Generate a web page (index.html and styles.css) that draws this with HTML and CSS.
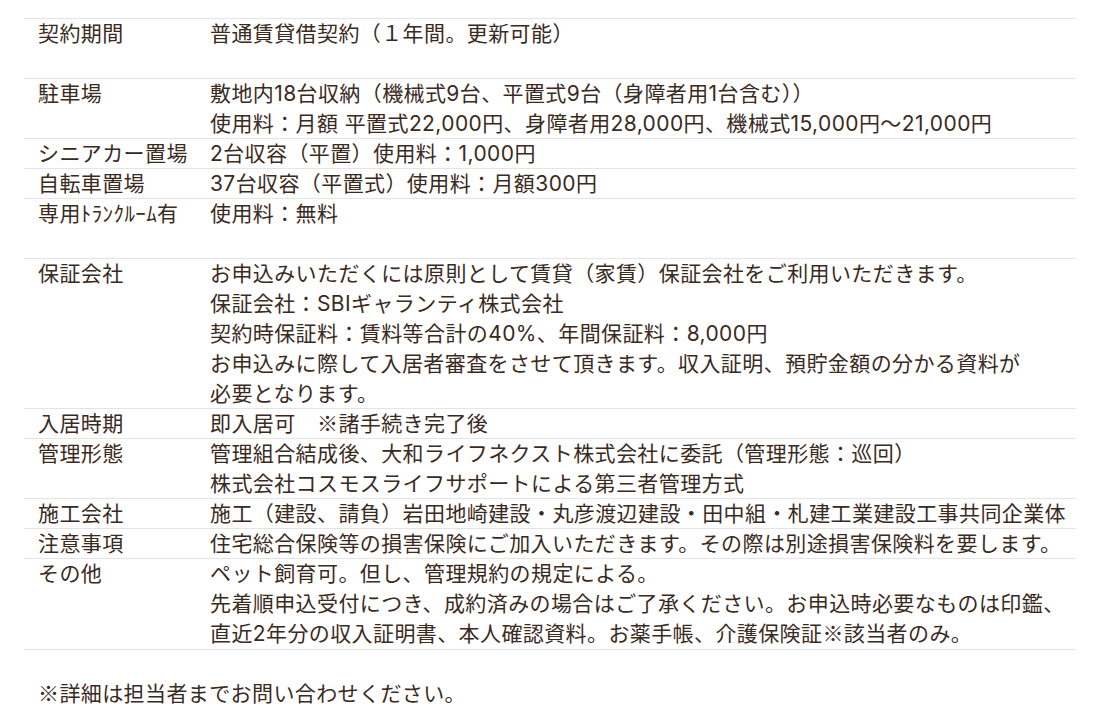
FILE: index.html
```html
<!DOCTYPE html>
<html lang="ja">
<head>
<meta charset="utf-8">
<title>物件概要</title>
<link rel="stylesheet" href="styles.css">
</head>
<body>
<div class="page">
  <div class="spec">
    <div class="row"><div class="label">契約期間</div><div class="value">普通賃貸借契約（１年間。更新可能）<br>&nbsp;</div></div>
    <div class="row"><div class="label">駐車場</div><div class="value">敷地内18台収納（機械式9台、平置式9台（身障者用1台含む））<br>使用料：月額 平置式22,000円、身障者用28,000円、機械式15,000円～21,000円</div></div>
    <div class="row"><div class="label">シニアカー置場</div><div class="value">2台収容（平置）使用料：1,000円</div></div>
    <div class="row"><div class="label">自転車置場</div><div class="value">37台収容（平置式）使用料：月額300円</div></div>
    <div class="row"><div class="label">専用ﾄﾗﾝｸﾙｰﾑ有</div><div class="value">使用料：無料<br>&nbsp;</div></div>
    <div class="row"><div class="label">保証会社</div><div class="value">お申込みいただくには原則として賃貸（家賃）保証会社をご利用いただきます。<br>保証会社：SBIギャランティ株式会社<br>契約時保証料：賃料等合計の40%、年間保証料：8,000円<br>お申込みに際して入居者審査をさせて頂きます。収入証明、預貯金額の分かる資料が<br>必要となります。</div></div>
    <div class="row"><div class="label">入居時期</div><div class="value">即入居可　<span class="mark">※</span>諸手続き完了後</div></div>
    <div class="row"><div class="label">管理形態</div><div class="value">管理組合結成後、大和ライフネクスト株式会社に委託（管理形態：巡回）<br>株式会社コスモスライフサポートによる第三者管理方式</div></div>
    <div class="row"><div class="label">施工会社</div><div class="value">施工（建設、請負）岩田地崎建設・丸彦渡辺建設・田中組・札建工業建設工事共同企業体</div></div>
    <div class="row"><div class="label">注意事項</div><div class="value">住宅総合保険等の損害保険にご加入いただきます。その際は別途損害保険料を要します。</div></div>
    <div class="row last"><div class="label">その他</div><div class="value">ペット飼育可。但し、管理規約の規定による。<br>先着順申込受付につき、成約済みの場合はご了承ください。お申込時必要なものは印鑑、<br>直近2年分の収入証明書、本人確認資料。お薬手帳、介護保険証<span class="mark">※</span>該当者のみ。</div></div>
  </div>
  <p class="note"><span class="mark">※</span>詳細は担当者までお問い合わせください。</p>
</div>
</body>
</html>
```
FILE: styles.css
```css
html, body {
  margin: 0;
  padding: 0;
  background: #ffffff;
}
body {
  font-family: "Inter", "Noto Sans CJK JP", sans-serif;
  font-size: 21px;
  letter-spacing: 0.4px;
  color: #3b2a1e;
  line-height: 30px;
}
.mark {
  font-family: "Noto Sans CJK JP", sans-serif;
  line-height: 1px;
}
.page {
  padding: 18px 24px 0 24px;
}
.spec {
  width: 1052px;
  display: flex;
  flex-direction: column;
}
.row {
  display: grid;
  grid-template-columns: 172px 1fr;
  padding-left: 14px;
  border-top: 1px solid #e4e4e4;
  margin-bottom: -1px;
}
.row.last {
  border-bottom: 1px solid #e4e4e4;
  margin-bottom: 0;
}
.label, .value {
  white-space: nowrap;
}
.note {
  margin: 29px 0 0 14px;
}
```
